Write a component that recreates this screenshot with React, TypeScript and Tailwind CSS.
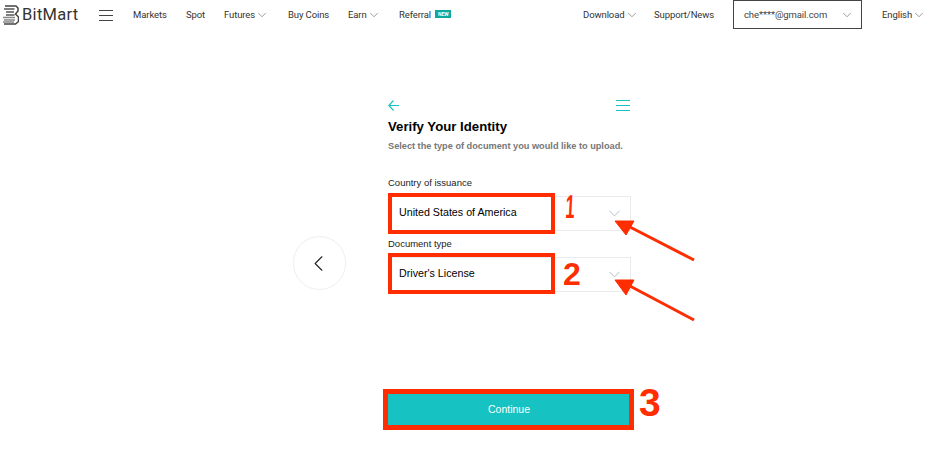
import { ChevronDown, ChevronLeft } from "lucide-react";
import type { ReactNode } from "react";

function Caret() {
  return <ChevronDown className="h-[14px] w-[14px] shrink-0 text-[#555]" strokeWidth={1} />;
}

function NavItem({ label, caret, className }: { label: string; caret?: boolean; className: string }) {
  return (
    <span className={`flex shrink-0 items-center ${className}`}>
      {label}
      {caret ? <Caret /> : null}
    </span>
  );
}

function Logo() {
  return (
    <svg width="16" height="20" viewBox="0 0 16 20" fill="none" className="shrink-0">
      <path d="M2 1H13L15 3V6L12.5 9L15.5 12V16.5L12.5 19H1" stroke="#444" strokeWidth="1.5" />
      <path d="M1 4H11.5M3 7H11M3 10H11.5" stroke="#555" strokeWidth="1.4" />
      <path d="M0 12.5H12M1 15H12M0 17H11" stroke="#888" strokeWidth="1.4" />
    </svg>
  );
}

function Burger({ className, stroke }: { className: string; stroke: string }) {
  return (
    <svg width="14" height="11" viewBox="0 0 14 11" className={className} stroke={stroke} strokeWidth="1.1">
      <path d="M0 .5H14M0 5.5H14M0 10.5H14" />
    </svg>
  );
}

function SelectBox({ label, value, children }: { label: string; value: string; children: ReactNode }) {
  return (
    <div>
      <div className="text-[9.5px] leading-[12px] text-[#222]">{label}</div>
      <div className="relative mt-[7px] flex h-[35px] items-center justify-between border border-[#e8eaee] pb-[2px] pl-[10px] pr-[6px] text-[10.7px] text-black">
        {value}
        <ChevronDown className="h-[19px] w-[19px] translate-y-[1px] text-[#a9b3bd]" strokeWidth={1.1} />
        {children}
      </div>
    </div>
  );
}

export default function App() {
  return (
    <div className="relative h-[456px] w-[936px] overflow-hidden bg-white font-['Liberation_Sans',sans-serif]">
      <header className="flex h-[30px] items-center font-['Roboto',sans-serif] text-[9.5px] tracking-[-0.1px] text-[#333]">
        <div className="ml-[3px] flex w-[96px] items-center gap-[3px]">
          <Logo />
          <span className="text-[16.5px] tracking-[0.3px] text-[#333]">BitMart</span>
        </div>
        <Burger className="shrink-0" stroke="#444" />
        <NavItem label="Markets" className="ml-[20px] w-[53px]" />
        <NavItem label="Spot" className="w-[38px]" />
        <NavItem label="Futures" caret className="w-[64px]" />
        <NavItem label="Buy Coins" className="w-[60px]" />
        <NavItem label="Earn" caret className="w-[51px]" />
        <span className="relative flex w-[56px] shrink-0 items-center">
          Referral
          <span className="ml-[4px] -translate-y-[1px] bg-[#0fa8a0] px-[3px] text-[5px] leading-[8px] font-bold text-white">NEW</span>
        </span>
        <NavItem label="Download" caret className="ml-[128px] w-[71px]" />
        <NavItem label="Support/News" className="w-[79px]" />
        <div className="flex h-[29px] w-[129px] shrink-0 items-center justify-between self-start border border-[#444] pt-[1px] pl-[10px] pr-[7px] text-[#444]">
          che****@gmail.com
          <Caret />
        </div>
        <NavItem label="English" caret className="ml-[20px]" />
      </header>

      <main className="flex pl-[293px]">
        <button className="mt-[206px] flex h-[54px] w-[53px] shrink-0 items-center justify-center rounded-full border border-[#eeeeee]">
          <ChevronLeft className="h-[27px] w-[27px] -translate-x-[1px] text-[#222]" strokeWidth={1} />
        </button>

        <section className="ml-[42px] flex w-[243px] flex-col pt-[70px]">
          <div className="flex items-center justify-between pr-[1px]">
            <svg width="11" height="11" viewBox="0 0 11 11" fill="none" stroke="#17c2c2" strokeWidth="1.1">
              <path d="M5.5 .5 .8 5.5l4.7 5M.8 5.5H11" />
            </svg>
            <Burger className="" stroke="#17c2c2" />
          </div>
          <h1 className="mt-[7px] text-[13.2px] leading-[18px] font-bold text-black">Verify Your Identity</h1>
          <p className="mt-[4px] text-[9.2px] leading-[12px] font-bold text-[#777]">
            Select the type of document you would like to upload.
          </p>

          <div className="mt-[25px] flex flex-col gap-[7px]">
            <SelectBox label="Country of issuance" value="United States of America">
              <span className="absolute -top-[4px] -left-[1px] h-[41px] w-[167px] border-[4px] border-[#ff2d00]" />
            </SelectBox>
            <SelectBox label="Document type" value="Driver's License">
              <span className="absolute -top-[5px] -left-[1px] h-[41px] w-[167px] border-[4px] border-[#ff2d00]" />
            </SelectBox>
          </div>

          <button className="relative mt-[102px] h-[31px] w-[242px] bg-[#17c2c2] text-[10.5px] text-white">
            Continue
            <span className="absolute -top-[5px] -left-[5px] h-[41px] w-[251px] border-[5px] border-[#ff2d00]" />
          </button>
        </section>
      </main>

      {/* red annotations painted on top of the screenshot */}
      <svg width="936" height="456" className="pointer-events-none absolute top-0 left-0" fill="#ff2d00" stroke="#ff2d00">
        <path d="M694 260 628 226" strokeWidth="3" />
        <path d="M615 221 634 221 626 235Z" />
        <path d="M694 320 628 285" strokeWidth="3" />
        <path d="M615 280 634 280 626 295Z" />
      </svg>
      <span className="absolute top-[190px] left-[561px] scale-x-50 -skew-x-6 text-[33px] leading-none font-bold text-[#ff2d00]">1</span>
      <span className="absolute top-[258px] left-[563px] text-[32px] leading-none font-bold text-[#ff2d00]">2</span>
      <span className="absolute top-[383px] left-[639px] text-[39px] leading-none font-bold text-[#ff2d00]">3</span>
    </div>
  );
}
